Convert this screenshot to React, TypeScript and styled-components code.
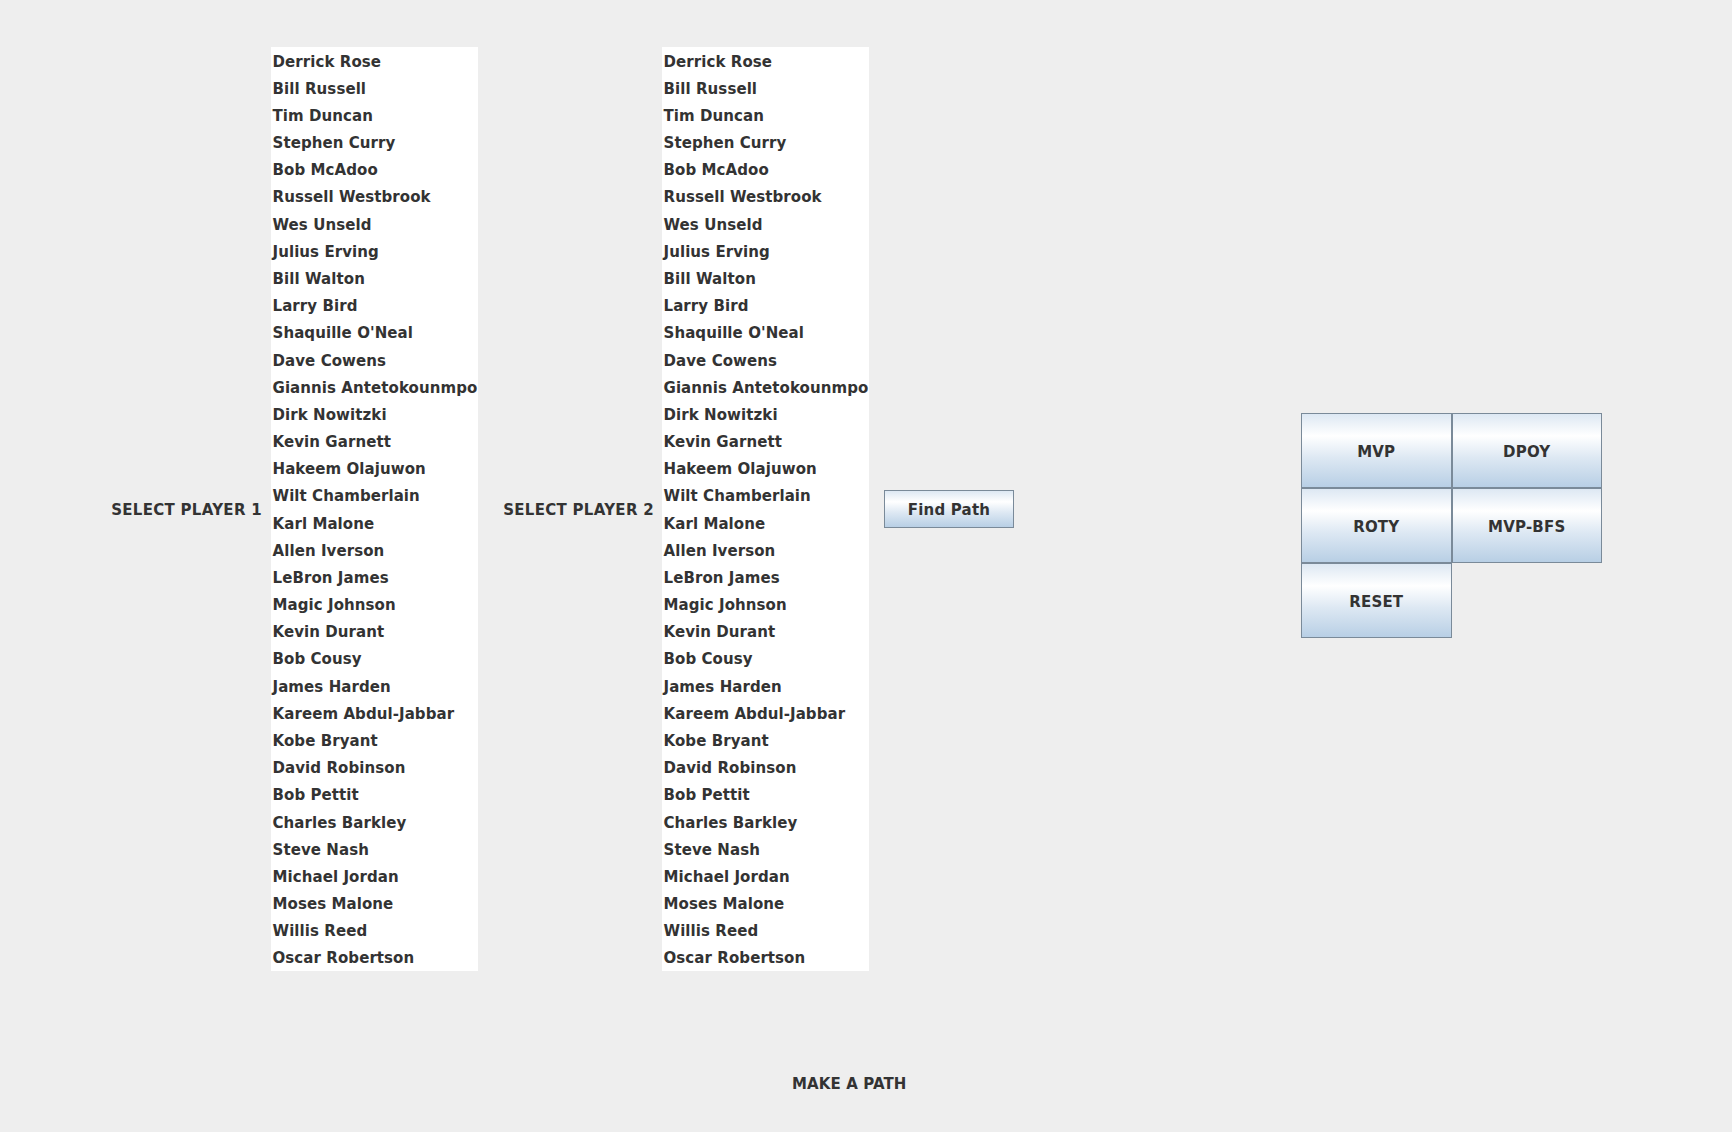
import React from "react";
import styled, { createGlobalStyle } from "styled-components";

const GlobalStyle = createGlobalStyle`
  html, body {
    margin: 0;
    padding: 0;
    background: #eeeeee;
  }
  body {
    font-family: "DejaVu Sans", "Liberation Sans", sans-serif;
    color: #333333;
  }
`;

const players = [
  "Derrick Rose",
  "Bill Russell",
  "Tim Duncan",
  "Stephen Curry",
  "Bob McAdoo",
  "Russell Westbrook",
  "Wes Unseld",
  "Julius Erving",
  "Bill Walton",
  "Larry Bird",
  "Shaquille O'Neal",
  "Dave Cowens",
  "Giannis Antetokounmpo",
  "Dirk Nowitzki",
  "Kevin Garnett",
  "Hakeem Olajuwon",
  "Wilt Chamberlain",
  "Karl Malone",
  "Allen Iverson",
  "LeBron James",
  "Magic Johnson",
  "Kevin Durant",
  "Bob Cousy",
  "James Harden",
  "Kareem Abdul-Jabbar",
  "Kobe Bryant",
  "David Robinson",
  "Bob Pettit",
  "Charles Barkley",
  "Steve Nash",
  "Michael Jordan",
  "Moses Malone",
  "Willis Reed",
  "Oscar Robertson",
];

const Frame = styled.div`
  width: 1732px;
  height: 1132px;
  display: flex;
  flex-direction: column;
  background: #eeeeee;
  overflow: hidden;
`;

const MainRow = styled.div`
  display: flex;
  align-items: center;
  padding-top: 47px;
  padding-left: 102px;
`;

const SelectLabel = styled.div<{ $before?: number; $after: number }>`
  width: 160px;
  margin-left: ${(p) => p.$before ?? 0}px;
  margin-right: ${(p) => p.$after}px;
  padding-top: 2px;
  text-align: right;
  font-weight: bold;
  font-size: 15px;
  letter-spacing: 0.3px;
  color: #333333;
  white-space: nowrap;
`;

const PlayerList = styled.ul`
  list-style: none;
  margin: 0;
  padding: 0;
  width: 207px;
  height: 924px;
  background: #ffffff;
  display: grid;
  grid-template-rows: repeat(34, 1fr);
`;

const PlayerItem = styled.li`
  display: flex;
  align-items: center;
  padding-left: 1.5px;
  padding-top: 2px;
  font-weight: bold;
  font-size: 15px;
  letter-spacing: 0.08px;
  color: #333333;
  white-space: nowrap;
  cursor: default;
`;

const OceanButton = styled.button`
  box-sizing: border-box;
  margin: 0;
  padding: 2px 0 0 0;
  border: 1px solid #7a8a99;
  background: linear-gradient(
    to bottom,
    #dde8f3 0%,
    #ffffff 30%,
    #dde8f3 60%,
    #b8cfe5 100%
  );
  font-family: "DejaVu Sans", "Liberation Sans", sans-serif;
  font-weight: bold;
  font-size: 15px;
  letter-spacing: 0.2px;
  color: #333333;
  display: flex;
  align-items: center;
  justify-content: center;
  cursor: pointer;
`;

const FindPathButton = styled(OceanButton)`
  width: 130px;
  height: 38px;
  margin-left: 15px;
`;

const AwardGrid = styled.div`
  align-self: flex-start;
  margin-top: 366px;
  margin-left: 287px;
  display: grid;
  grid-template-columns: 150.5px 150.5px;
  grid-template-rows: repeat(3, 75px);
`;

const Footer = styled.div`
  padding-top: 104px;
  padding-left: 792px;
  font-weight: bold;
  font-size: 15px;
  letter-spacing: 0.1px;
  color: #333333;
`;

function PlayerSelect({ id }: { id: string }) {
  return (
    <PlayerList aria-label={id}>
      {players.map((name) => (
        <PlayerItem key={name}>{name}</PlayerItem>
      ))}
    </PlayerList>
  );
}

export default function App() {
  return (
    <>
      <GlobalStyle />
      <Frame>
        <MainRow>
          <SelectLabel $after={9}>SELECT PLAYER 1</SelectLabel>
          <PlayerSelect id="player1" />
          <SelectLabel $before={16} $after={8}>
            SELECT PLAYER 2
          </SelectLabel>
          <PlayerSelect id="player2" />
          <FindPathButton>Find Path</FindPathButton>
          <AwardGrid>
            <OceanButton>MVP</OceanButton>
            <OceanButton>DPOY</OceanButton>
            <OceanButton>ROTY</OceanButton>
            <OceanButton>MVP-BFS</OceanButton>
            <OceanButton>RESET</OceanButton>
          </AwardGrid>
        </MainRow>
        <Footer>MAKE A PATH</Footer>
      </Frame>
    </>
  );
}
